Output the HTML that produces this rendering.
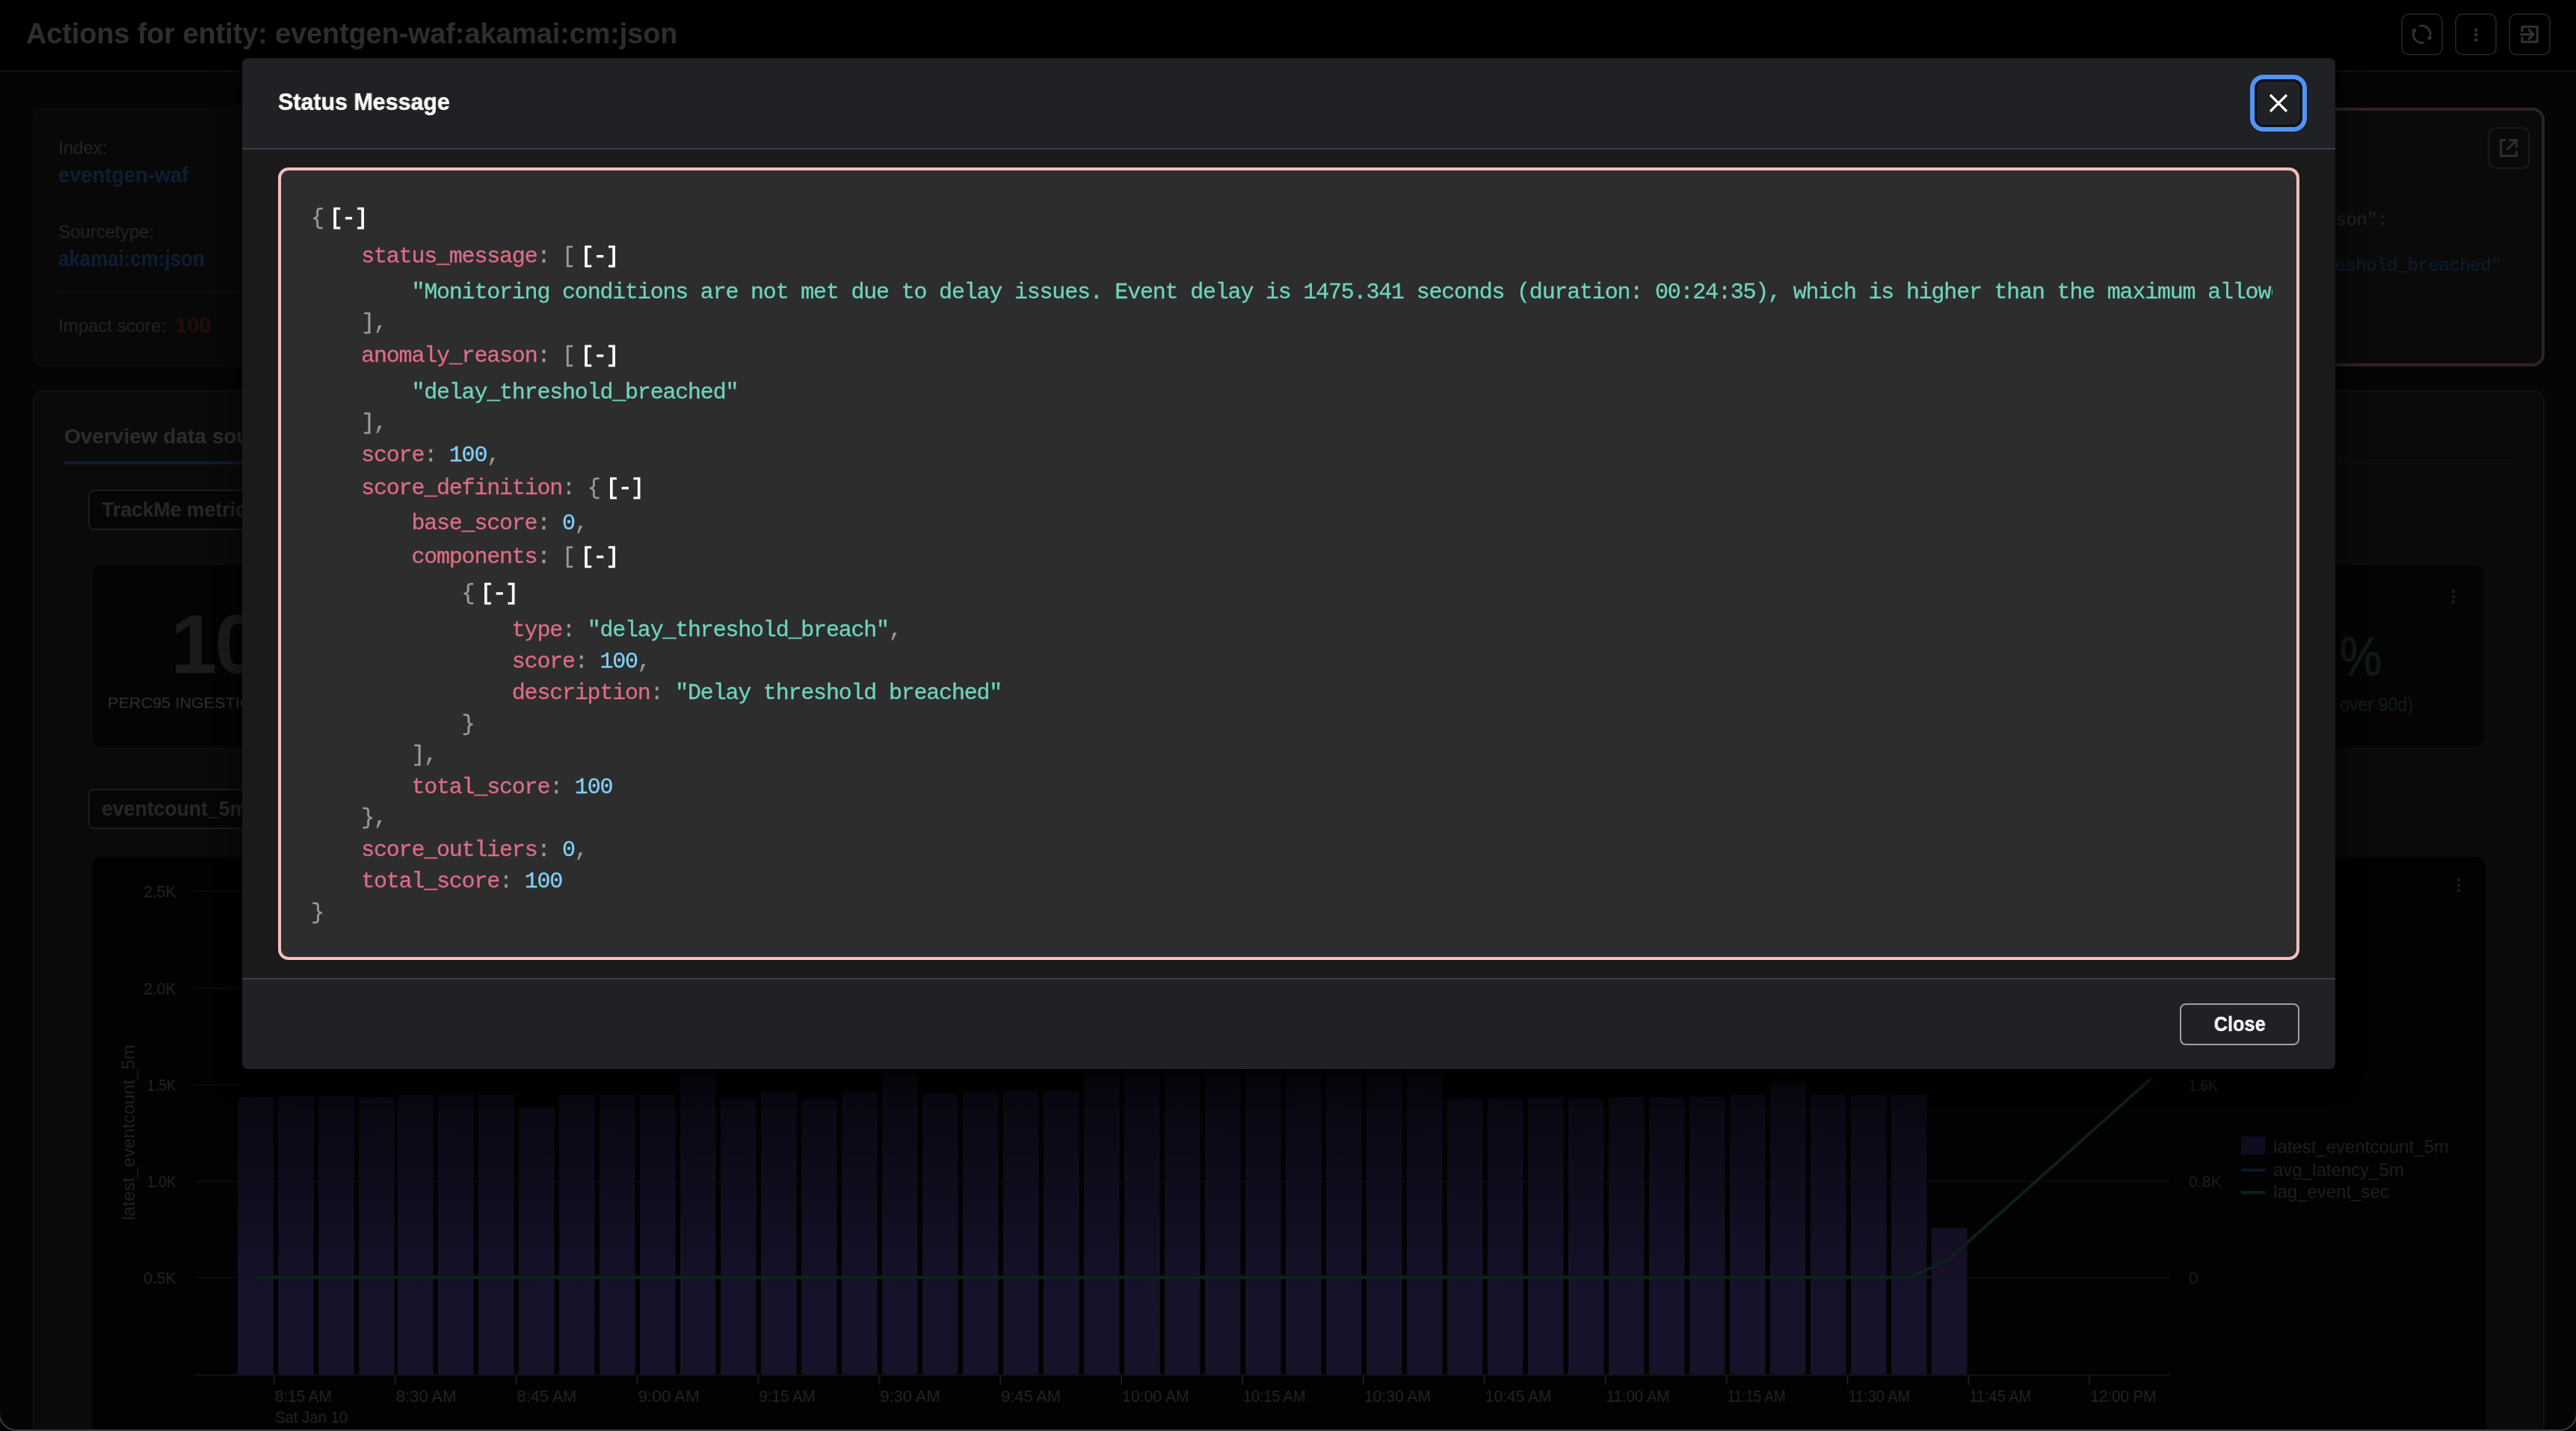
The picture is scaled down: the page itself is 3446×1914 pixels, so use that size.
<!DOCTYPE html>
<html lang="en">
<head>
<meta charset="utf-8">
<title>Status Message</title>
<style>
*{box-sizing:border-box;margin:0;padding:0}
html,body{width:3446px;height:1914px;overflow:hidden;background:#020202}
body{position:relative;font-family:"Liberation Sans",sans-serif;color:#fff}
.abs{position:absolute}
/* ---------- dimmed page behind the modal ---------- */
#page{position:absolute;left:0;top:0;width:3446px;height:1914px;overflow:hidden;background:#050505}
#topbar{position:absolute;left:0;top:0;width:3446px;height:96px;background:#000;border-bottom:2px solid #0f0f0f}
#ptitle{position:absolute;left:35px;top:20px;transform:scaleX(.992);font-size:38px;line-height:50px;font-weight:700;color:#2e2e2e;white-space:nowrap;transform-origin:0 50%}
.tbtn{position:absolute;top:18px;width:56px;height:56px;border:2px solid #1f1f1f;border-radius:10px}
.card{position:absolute;border-radius:14px;background:#080808;border:2px solid #0c0c0c}
.dimtxt{position:absolute;white-space:nowrap;color:#232323}
/* ---------- modal ---------- */
#modal{position:absolute;left:324px;top:78px;width:2800px;height:1352px;border-radius:8px;background:#202124;overflow:hidden;box-shadow:0 8px 32px 4px rgba(0,0,0,.6)}
#mhead{position:absolute;left:0;top:0;width:2800px;height:120px;background:#202124}
#mtitle{position:absolute;left:48px;top:36px;transform:scaleX(.95);font-size:32px;line-height:44px;font-weight:700;color:#fafafa;white-space:nowrap;transform-origin:0 50%;-webkit-text-stroke:.5px #fafafa;will-change:transform}
#mbody{position:absolute;left:0;top:120px;width:2800px;height:1112px;background:#1a1a1a;border-top:2px solid #3c3e44;border-bottom:2px solid #3c3e44}
#xbtn{position:absolute;left:2696px;top:32px;width:56px;height:56px;border-radius:8px;background:#202124;border:1px solid #232b3b;box-shadow:0 0 0 4px #111216,0 0 0 10px #5294f6}
#jbox{position:absolute;left:48px;top:146px;width:2704px;height:1060px;border:4px solid #f5bfbf;border-radius:14px;background:#2d2d2d;overflow:hidden}
#jclip{position:absolute;left:0;top:0;width:2664px;height:1052px;overflow:hidden;will-change:transform}
.ln{position:absolute;white-space:pre;font-family:"Liberation Mono",monospace;font-size:30px;letter-spacing:-1.2px;line-height:42px;height:42px;color:#9a9a9a}
.ln{-webkit-text-stroke:.3px currentColor}
.k{color:#dd6c86}.s{color:#6fd3bd}.n{color:#7fd0f7}.p{color:#9a9a9a}
.t{color:#fff;margin-left:8px;-webkit-text-stroke:.9px #fff}
#closebtn{position:absolute;left:2592px;top:1264px;width:160px;height:56px;border:2px solid #a0a0a4;border-radius:8px;background:#202124;color:#fafafa;font-size:28px;line-height:52px;font-weight:700;text-align:center}
#closebtn span{display:inline-block;transform:scaleX(.905);-webkit-text-stroke:.4px #fafafa;will-change:transform}
</style>
</head>
<body>
<div id="page">
  <div id="topbar"></div>
  <div id="ptitle">Actions for entity: eventgen-waf:akamai:cm:json</div>
  <div class="tbtn" style="left:3212px"></div>
  <div class="tbtn" style="left:3284px"></div>
  <div class="tbtn" style="left:3356px"></div>
  <!--PAGE-->
  <svg class="abs" style="left:3212px;top:18px" width="56" height="56" viewBox="0 0 56 56" fill="none" stroke="#333" stroke-width="2.6"><path d="M24.28 17.06 A11.4 11.4 0 0 1 38.37 32.17"/><path d="M31.32 38.74 A11.4 11.4 0 0 1 17.23 23.63"/><path d="M36.65 36.44 L42.01 32.78 L35.33 30.08 Z" fill="#333" stroke="none"/><path d="M18.95 19.36 L13.59 23.02 L20.27 25.72 Z" fill="#333" stroke="none"/></svg>
  <svg class="abs" style="left:3284px;top:18px" width="56" height="56" viewBox="0 0 56 56" fill="#333"><circle cx="28.4" cy="22" r="2.2"/><circle cx="28.4" cy="28.5" r="2.2"/><circle cx="28.4" cy="35.2" r="2.2"/></svg>
  <svg class="abs" style="left:3356px;top:18px" width="56" height="56" viewBox="0 0 56 56" fill="none" stroke="#333" stroke-width="3" stroke-linejoin="round" stroke-linecap="round"><path d="M17.9 23.5 V17.8 H38.2 V38 H17.9 V32.5"/><path d="M16.4 28 H32.5 M27 21.8 L33 28 L27 34.2"/></svg>
  <div class="card" style="left:44px;top:144px;width:700px;height:346px"></div>
  <div class="dimtxt" style="left:78px;top:183px;font-size:24px;line-height:30px">Index:</div>
  <div class="dimtxt" style="left:78px;top:216px;font-size:29px;line-height:36px;font-weight:700;color:#0f1d33;transform:scaleX(.94);transform-origin:0 0">eventgen-waf</div>
  <div class="dimtxt" style="left:78px;top:295px;font-size:24px;line-height:30px">Sourcetype:</div>
  <div class="dimtxt" style="left:78px;top:328px;font-size:29px;line-height:36px;font-weight:700;color:#0f1d33;transform:scaleX(.893);transform-origin:0 0">akamai:cm:json</div>
  <div class="abs" style="left:78px;top:390px;width:400px;height:2px;background:#0f0f0f"></div>
  <div class="dimtxt" style="left:78px;top:421px;font-size:24px;line-height:30px">Impact score:</div>
  <div class="dimtxt" style="left:234px;top:417px;font-size:29px;line-height:36px;font-weight:700;color:#240c08">100</div>
  <div class="abs" style="left:2900px;top:144px;width:504px;height:346px;border:4px solid #2e2424;border-radius:16px;background:#0a0a0a"></div>
  <div class="abs" style="left:3328px;top:170px;width:56px;height:56px;border:2px solid #1a1a1a;border-radius:10px"></div>
  <svg class="abs" style="left:3328px;top:170px" width="56" height="56" viewBox="0 0 56 56" fill="none" stroke="#2d2d2d" stroke-width="3"><path d="M24 17.5 H17.5 V38.5 H38.5 V32"/><path d="M28.5 17.5 H38.5 V27.5 M38 18 L25.5 30.5"/></svg>
  <div class="dimtxt" style="right:252px;top:280px;font-family:'Liberation Mono',monospace;font-size:24px;letter-spacing:-.5px;line-height:30px;color:#232323">"anomaly_reason":</div>
  <div class="dimtxt" style="right:100px;top:341px;font-family:'Liberation Mono',monospace;font-size:24px;letter-spacing:-.5px;line-height:30px;color:#0e1c30">"delay_threshold_breached"</div>
  <div class="card" style="left:44px;top:522px;width:3360px;height:1500px;background:#0a0a0a;border:2px solid #101010"></div>
  <div class="dimtxt" style="left:86px;top:566px;font-size:28px;line-height:36px;font-weight:700;color:#2c2c2c">Overview data source</div>
  <div class="abs" style="left:86px;top:619px;width:3276px;height:2px;background:#101010"></div>
  <div class="abs" style="left:86px;top:617px;width:400px;height:4px;background:#0e1a30"></div>
  <div class="abs" style="left:118px;top:655px;width:600px;height:54px;border:2px solid #1d1d1d;border-radius:8px;background:#060606"></div>
  <div class="dimtxt" style="left:136px;top:664px;font-size:28px;line-height:36px;font-weight:700;color:#272727;transform:scaleX(.95);transform-origin:0 0">TrackMe metrics</div>
  <div class="abs" style="left:121px;top:753px;width:800px;height:249px;border:2px solid #0d0d0d;border-radius:16px;background:#040404"></div>
  <div class="dimtxt" style="left:228px;top:800px;font-size:112px;line-height:124px;font-weight:700;color:#1b1b1b;letter-spacing:-3px">100</div>
  <div class="dimtxt" style="left:144px;top:926px;font-size:21px;line-height:28px;color:#2e2e2e;transform:scaleX(1.03);transform-origin:0 0">PERC95 INGESTION LATENCY</div>
  <div class="abs" style="left:2600px;top:753px;width:726px;height:249px;border:2px solid #0d0d0d;border-radius:16px;background:#040404"></div>
  <div class="dimtxt" style="left:3130px;top:838px;font-size:72px;line-height:80px;color:#0f1a17;-webkit-text-stroke:1.2px #0f1a17;transform:scaleX(.88);transform-origin:0 0">%</div>
  <div class="dimtxt" style="left:3130px;top:928px;font-size:25px;line-height:28px;color:#0f1a17;-webkit-text-stroke:.5px #0f1a17;transform:scaleX(.93);transform-origin:0 0">over 90d)</div>
  <svg class="abs" style="left:3272px;top:786px" width="20" height="28" fill="#1c1c1c"><circle cx="10" cy="5" r="2.2"/><circle cx="10" cy="12" r="2.2"/><circle cx="10" cy="19" r="2.2"/></svg>
  <div class="abs" style="left:118px;top:1055px;width:600px;height:54px;border:2px solid #1d1d1d;border-radius:8px;background:#060606"></div>
  <div class="dimtxt" style="left:136px;top:1064px;font-size:28px;line-height:36px;font-weight:700;color:#272727;transform:scaleX(.95);transform-origin:0 0">eventcount_5m</div>
  <div class="abs" style="left:121px;top:1144px;width:3206px;height:900px;border:2px solid #0a0a0a;border-radius:16px;background:#020202"></div>
  <svg class="abs" style="left:3279px;top:1172px" width="20" height="28" fill="#1c1c1c"><circle cx="10" cy="5" r="2.2"/><circle cx="10" cy="12" r="2.2"/><circle cx="10" cy="19" r="2.2"/></svg>
  <svg class="abs" style="left:0;top:1140px" width="3446" height="774" viewBox="0 1140 3446 774"><defs><linearGradient id="bg" x1="0" y1="1430" x2="0" y2="1720" gradientUnits="userSpaceOnUse"><stop offset="0" stop-color="#07060e"/><stop offset="1" stop-color="#171129"/></linearGradient></defs><rect x="260" y="1191" width="2643" height="2" fill="#0b0b0b"/><rect x="260" y="1321" width="2643" height="2" fill="#0b0b0b"/><rect x="260" y="1579" width="2643" height="2" fill="#0b0b0b"/><rect x="260" y="1708" width="2643" height="2" fill="#0b0b0b"/><rect x="260" y="1450" width="60" height="2" fill="#0b0b0b"/><rect x="260" y="1838" width="2643" height="2" fill="#111"/><rect x="318.2" y="1468" width="47.5" height="370" fill="url(#bg)"/><rect x="372.2" y="1466" width="47.5" height="372" fill="url(#bg)"/><rect x="426.2" y="1466" width="47.5" height="372" fill="url(#bg)"/><rect x="480.2" y="1468" width="47.5" height="370" fill="url(#bg)"/><rect x="532.0" y="1464" width="47.5" height="374" fill="url(#bg)"/><rect x="586.0" y="1465" width="47.5" height="373" fill="url(#bg)"/><rect x="640.0" y="1464" width="47.5" height="374" fill="url(#bg)"/><rect x="694.0" y="1481" width="47.5" height="357" fill="url(#bg)"/><rect x="748.0" y="1464" width="47.5" height="374" fill="url(#bg)"/><rect x="802.0" y="1464" width="47.5" height="374" fill="url(#bg)"/><rect x="856.0" y="1464" width="47.5" height="374" fill="url(#bg)"/><rect x="910.0" y="1400" width="47.5" height="438" fill="url(#bg)"/><rect x="964.0" y="1470" width="47.5" height="368" fill="url(#bg)"/><rect x="1018.0" y="1460" width="47.5" height="378" fill="url(#bg)"/><rect x="1072.0" y="1470" width="47.5" height="368" fill="url(#bg)"/><rect x="1126.0" y="1460" width="47.5" height="378" fill="url(#bg)"/><rect x="1180.0" y="1400" width="47.5" height="438" fill="url(#bg)"/><rect x="1234.0" y="1462" width="47.5" height="376" fill="url(#bg)"/><rect x="1288.0" y="1460" width="47.5" height="378" fill="url(#bg)"/><rect x="1342.0" y="1459" width="47.5" height="379" fill="url(#bg)"/><rect x="1396.0" y="1459" width="47.5" height="379" fill="url(#bg)"/><rect x="1450.0" y="1400" width="47.5" height="438" fill="url(#bg)"/><rect x="1504.0" y="1400" width="47.5" height="438" fill="url(#bg)"/><rect x="1558.0" y="1400" width="47.5" height="438" fill="url(#bg)"/><rect x="1612.0" y="1400" width="47.5" height="438" fill="url(#bg)"/><rect x="1666.0" y="1400" width="47.5" height="438" fill="url(#bg)"/><rect x="1720.0" y="1400" width="47.5" height="438" fill="url(#bg)"/><rect x="1774.0" y="1400" width="47.5" height="438" fill="url(#bg)"/><rect x="1828.0" y="1400" width="47.5" height="438" fill="url(#bg)"/><rect x="1882.0" y="1400" width="47.5" height="438" fill="url(#bg)"/><rect x="1936.0" y="1470" width="47.5" height="368" fill="url(#bg)"/><rect x="1990.0" y="1470" width="47.5" height="368" fill="url(#bg)"/><rect x="2044.0" y="1468" width="47.5" height="370" fill="url(#bg)"/><rect x="2098.0" y="1470" width="47.5" height="368" fill="url(#bg)"/><rect x="2152.0" y="1468" width="47.5" height="370" fill="url(#bg)"/><rect x="2206.0" y="1468" width="47.5" height="370" fill="url(#bg)"/><rect x="2260.0" y="1467" width="47.5" height="371" fill="url(#bg)"/><rect x="2314.0" y="1464" width="47.5" height="374" fill="url(#bg)"/><rect x="2368.0" y="1448" width="47.5" height="390" fill="url(#bg)"/><rect x="2422.0" y="1464" width="47.5" height="374" fill="url(#bg)"/><rect x="2476.0" y="1464" width="47.5" height="374" fill="url(#bg)"/><rect x="2530.0" y="1464" width="47.5" height="374" fill="url(#bg)"/><rect x="2584.0" y="1642" width="47.5" height="196" fill="url(#bg)"/><rect x="365.8" y="1840" width="2" height="12" fill="#1a1a1a"/><text x="367.8" y="1875" font-size="22.5" fill="#222" textLength="75.8" lengthAdjust="spacingAndGlyphs">8:15 AM</text><rect x="527.7" y="1840" width="2" height="12" fill="#1a1a1a"/><text x="529.7" y="1875" font-size="22.5" fill="#222" textLength="80.6" lengthAdjust="spacingAndGlyphs">8:30 AM</text><rect x="689.6" y="1840" width="2" height="12" fill="#1a1a1a"/><text x="691.6" y="1875" font-size="22.5" fill="#222" textLength="79.6" lengthAdjust="spacingAndGlyphs">8:45 AM</text><rect x="851.5" y="1840" width="2" height="12" fill="#1a1a1a"/><text x="853.5" y="1875" font-size="22.5" fill="#222" textLength="82.2" lengthAdjust="spacingAndGlyphs">9:00 AM</text><rect x="1013.4" y="1840" width="2" height="12" fill="#1a1a1a"/><text x="1015.4" y="1875" font-size="22.5" fill="#222" textLength="75.3" lengthAdjust="spacingAndGlyphs">9:15 AM</text><rect x="1175.3" y="1840" width="2" height="12" fill="#1a1a1a"/><text x="1177.3" y="1875" font-size="22.5" fill="#222" textLength="80.3" lengthAdjust="spacingAndGlyphs">9:30 AM</text><rect x="1337.2" y="1840" width="2" height="12" fill="#1a1a1a"/><text x="1339.2" y="1875" font-size="22.5" fill="#222" textLength="79.8" lengthAdjust="spacingAndGlyphs">9:45 AM</text><rect x="1499.1" y="1840" width="2" height="12" fill="#1a1a1a"/><text x="1501.1" y="1875" font-size="22.5" fill="#222" textLength="89.6" lengthAdjust="spacingAndGlyphs">10:00 AM</text><rect x="1661.0" y="1840" width="2" height="12" fill="#1a1a1a"/><text x="1663.0" y="1875" font-size="22.5" fill="#222" textLength="83.5" lengthAdjust="spacingAndGlyphs">10:15 AM</text><rect x="1822.9" y="1840" width="2" height="12" fill="#1a1a1a"/><text x="1824.9" y="1875" font-size="22.5" fill="#222" textLength="89.1" lengthAdjust="spacingAndGlyphs">10:30 AM</text><rect x="1984.8" y="1840" width="2" height="12" fill="#1a1a1a"/><text x="1986.8" y="1875" font-size="22.5" fill="#222" textLength="88.6" lengthAdjust="spacingAndGlyphs">10:45 AM</text><rect x="2146.7" y="1840" width="2" height="12" fill="#1a1a1a"/><text x="2148.7" y="1875" font-size="22.5" fill="#222" textLength="84.5" lengthAdjust="spacingAndGlyphs">11:00 AM</text><rect x="2308.6" y="1840" width="2" height="12" fill="#1a1a1a"/><text x="2310.6" y="1875" font-size="22.5" fill="#222" textLength="78.0" lengthAdjust="spacingAndGlyphs">11:15 AM</text><rect x="2470.5" y="1840" width="2" height="12" fill="#1a1a1a"/><text x="2472.5" y="1875" font-size="22.5" fill="#222" textLength="82.6" lengthAdjust="spacingAndGlyphs">11:30 AM</text><rect x="2632.4" y="1840" width="2" height="12" fill="#1a1a1a"/><text x="2634.4" y="1875" font-size="22.5" fill="#222" textLength="82.6" lengthAdjust="spacingAndGlyphs">11:45 AM</text><rect x="2794.3" y="1840" width="2" height="12" fill="#1a1a1a"/><text x="2796.3" y="1875" font-size="22.5" fill="#222" textLength="88.2" lengthAdjust="spacingAndGlyphs">12:00 PM</text><text x="368" y="1903" font-size="22.5" fill="#222" textLength="97" lengthAdjust="spacingAndGlyphs">Sat Jan 10</text><text x="192.2" y="1200" font-size="22.5" fill="#222" textLength="43.3" lengthAdjust="spacingAndGlyphs">2.5K</text><text x="192.2" y="1330" font-size="22.5" fill="#222" textLength="43.3" lengthAdjust="spacingAndGlyphs">2.0K</text><text x="196.5" y="1459" font-size="22.5" fill="#222" textLength="39.0" lengthAdjust="spacingAndGlyphs">1.5K</text><text x="196.5" y="1588" font-size="22.5" fill="#222" textLength="39.0" lengthAdjust="spacingAndGlyphs">1.0K</text><text x="192.2" y="1717" font-size="22.5" fill="#222" textLength="43.3" lengthAdjust="spacingAndGlyphs">0.5K</text><text x="2928" y="1459" font-size="22.5" fill="#1c1c1c" textLength="38.5" lengthAdjust="spacingAndGlyphs">1.6K</text><text x="2928" y="1588" font-size="22.5" fill="#1c1c1c" textLength="44.0" lengthAdjust="spacingAndGlyphs">0.8K</text><text x="2928" y="1717" font-size="22.5" fill="#1c1c1c" textLength="12.5" lengthAdjust="spacingAndGlyphs">0</text><text transform="translate(180,1632) rotate(-90)" font-size="24" fill="#1f1f1f">latest_eventcount_5m</text><path d="M342 1708 H2606" stroke="#0c1626" stroke-width="4" fill="none"/><path d="M342 1709 H2554 L2606 1685 L2877 1443" stroke="#0d211b" stroke-width="4" fill="none" stroke-linejoin="round"/><rect x="2998" y="1520" width="32" height="24" fill="#100c1f"/><rect x="2998" y="1563" width="32" height="4" fill="#0c1626"/><rect x="2998" y="1593" width="32" height="4" fill="#0d211b"/><text x="3041" y="1542" font-size="24" fill="#1e1e1e">latest_eventcount_5m</text><text x="3041" y="1573" font-size="24" fill="#1e1e1e">avg_latency_5m</text><text x="3041" y="1602" font-size="24" fill="#1e1e1e">lag_event_sec</text></svg>
  <svg class="abs" style="left:0;top:1884px" width="3446" height="30" viewBox="0 0 3446 30"><path d="M0 0 V30 H24 V29 A23 23 0 0 1 0 6 Z" fill="#000"/><path d="M3446 0 V30 H3422 V29 A23 23 0 0 0 3446 6 Z" fill="#000"/><path d="M-1 6 A23 23 0 0 0 22 29 H3424 A23 23 0 0 0 3447 6" fill="none" stroke="#3a3a3a" stroke-width="2"/></svg>
</div>

<div id="modal">
  <div id="mhead">
    <div id="mtitle">Status Message</div>
    <div id="xbtn">
      <svg class="abs" style="left:14px;top:14px" width="26" height="26" viewBox="0 0 26 26"><path d="M2 2 L24 24 M24 2 L2 24" stroke="#fff" stroke-width="3.2" stroke-linecap="butt" fill="none"/></svg>
    </div>
  </div>
  <div id="mbody"></div>
  <div id="jbox"><div id="jclip">
    <!--JSON-->
    <div class="ln" style="left:40.0px;top:43.3px">{<span class="t">[-]</span></div>
    <div class="ln" style="left:107.2px;top:93.6px"><span class="k">status_message</span>: [<span class="t">[-]</span></div>
    <div class="ln" style="left:174.4px;top:142.0px"><span class="s">"Monitoring conditions are not met due to delay issues. Event delay is 1475.341 seconds (duration: 00:24:35), which is higher than the maximum allowed delay of 900 seconds</span></div>
    <div class="ln" style="left:107.2px;top:183.4px">],</div>
    <div class="ln" style="left:107.2px;top:227.3px"><span class="k">anomaly_reason</span>: [<span class="t">[-]</span></div>
    <div class="ln" style="left:174.4px;top:276.0px"><span class="s">"delay_threshold_breached"</span></div>
    <div class="ln" style="left:107.2px;top:317.3px">],</div>
    <div class="ln" style="left:107.2px;top:359.7px"><span class="k">score</span>: <span class="n">100</span>,</div>
    <div class="ln" style="left:107.2px;top:403.6px"><span class="k">score_definition</span>: {<span class="t">[-]</span></div>
    <div class="ln" style="left:174.4px;top:451.3px"><span class="k">base_score</span>: <span class="n">0</span>,</div>
    <div class="ln" style="left:174.4px;top:495.5px"><span class="k">components</span>: [<span class="t">[-]</span></div>
    <div class="ln" style="left:241.6px;top:545.2px">{<span class="t">[-]</span></div>
    <div class="ln" style="left:308.8px;top:593.9px"><span class="k">type</span>: <span class="s">"delay_threshold_breach"</span>,</div>
    <div class="ln" style="left:308.8px;top:635.8px"><span class="k">score</span>: <span class="n">100</span>,</div>
    <div class="ln" style="left:308.8px;top:677.9px"><span class="k">description</span>: <span class="s">"Delay threshold breached"</span></div>
    <div class="ln" style="left:241.6px;top:719.5px">}</div>
    <div class="ln" style="left:174.4px;top:761.4px">],</div>
    <div class="ln" style="left:174.4px;top:803.7px"><span class="k">total_score</span>: <span class="n">100</span></div>
    <div class="ln" style="left:107.2px;top:845.3px">},</div>
    <div class="ln" style="left:107.2px;top:888.0px"><span class="k">score_outliers</span>: <span class="n">0</span>,</div>
    <div class="ln" style="left:107.2px;top:930.0px"><span class="k">total_score</span>: <span class="n">100</span></div>
    <div class="ln" style="left:40.0px;top:971.5px">}</div>
  </div></div>
  <div id="closebtn"><span>Close</span></div>
</div>
</body>
</html>
